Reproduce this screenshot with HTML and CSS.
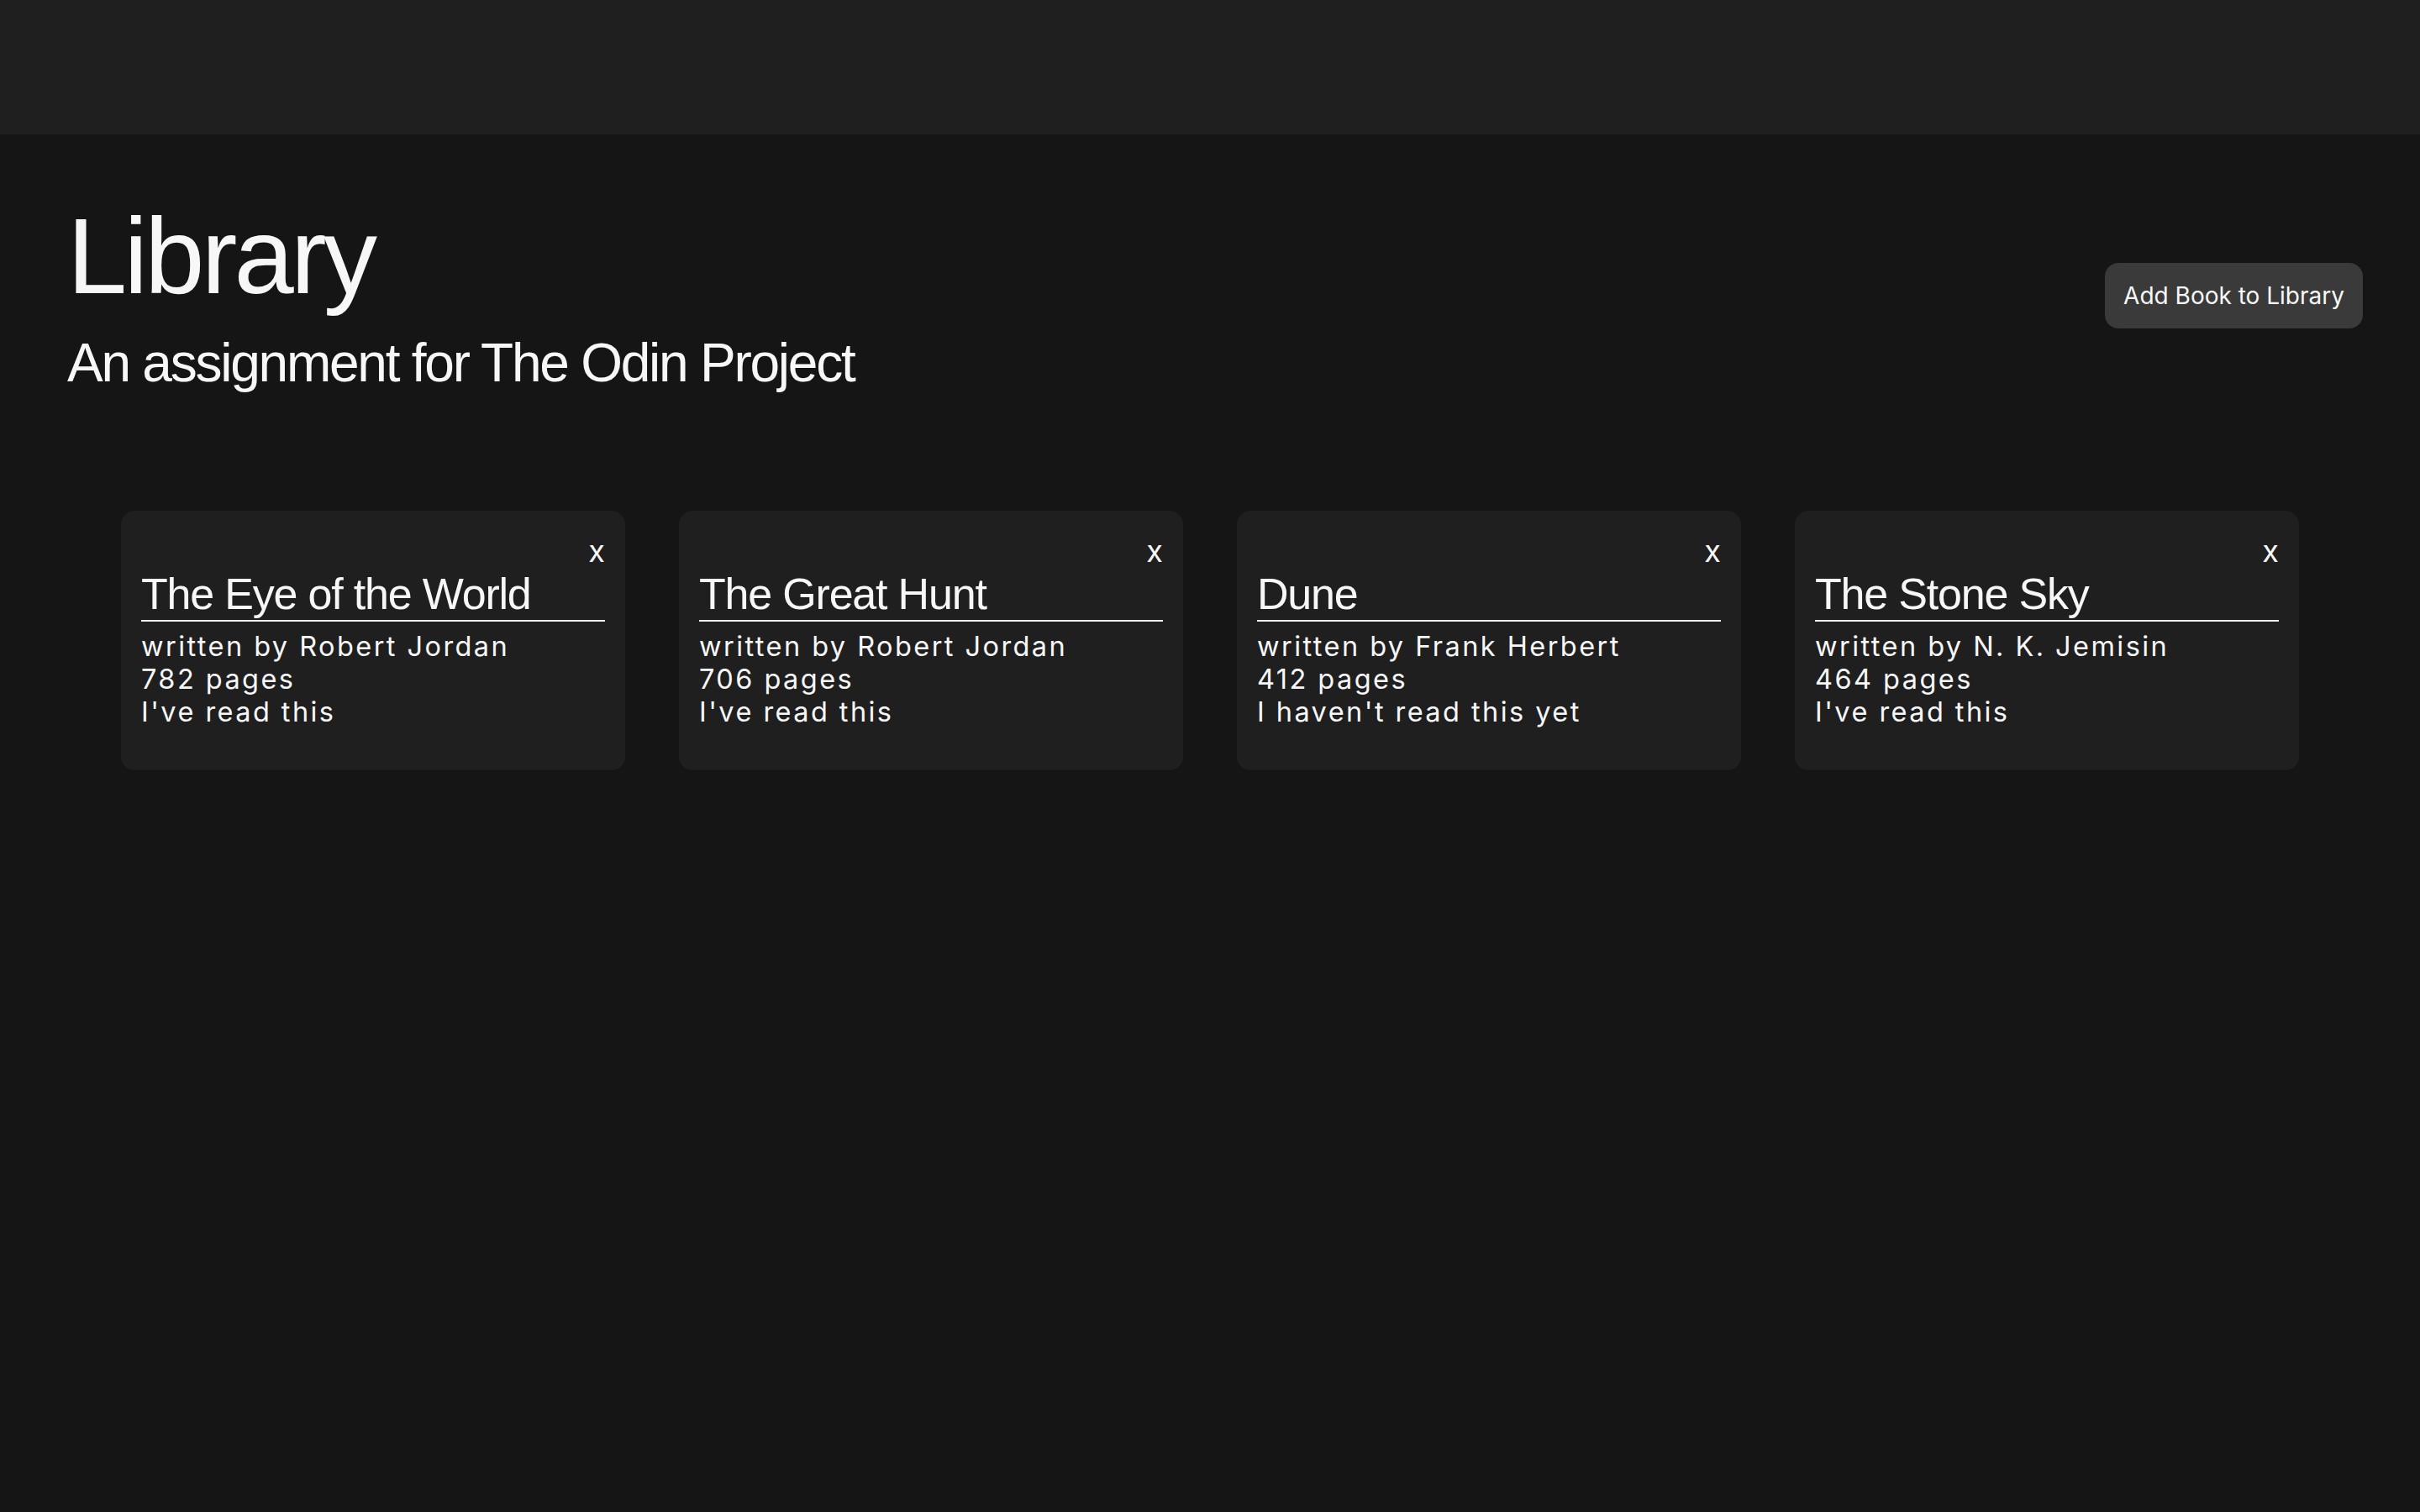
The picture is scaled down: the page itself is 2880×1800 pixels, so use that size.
FILE: index.html
```html
<!DOCTYPE html>
<html lang="en">
<head>
<meta charset="utf-8">
<title>Library</title>
<link rel="stylesheet" href="styles.css">
</head>
<body>
<header class="topbar"></header>
<main class="main">
  <section class="intro">
    <div class="intro-text">
      <h1 class="title">Library</h1>
      <p class="subtitle">An assignment for The Odin Project</p>
    </div>
    <button class="add-btn">Add Book to Library</button>
  </section>
  <section class="books">
    <article class="card">
      <button class="remove">x</button>
      <h2 class="card-title">The Eye of the World</h2>
      <p class="card-line">written by Robert Jordan</p>
      <p class="card-line">782 pages</p>
      <p class="card-line">I've read this</p>
    </article>
    <article class="card">
      <button class="remove">x</button>
      <h2 class="card-title">The Great Hunt</h2>
      <p class="card-line">written by Robert Jordan</p>
      <p class="card-line">706 pages</p>
      <p class="card-line">I've read this</p>
    </article>
    <article class="card">
      <button class="remove">x</button>
      <h2 class="card-title">Dune</h2>
      <p class="card-line">written by Frank Herbert</p>
      <p class="card-line">412 pages</p>
      <p class="card-line">I haven't read this yet</p>
    </article>
    <article class="card">
      <button class="remove">x</button>
      <h2 class="card-title">The Stone Sky</h2>
      <p class="card-line">written by N. K. Jemisin</p>
      <p class="card-line">464 pages</p>
      <p class="card-line">I've read this</p>
    </article>
  </section>
</main>
</body>
</html>
```
FILE: styles.css
```css
* { box-sizing: border-box; }

html, body {
  margin: 0;
  padding: 0;
  background: #151515;
  color: #f7f7f7;
  font-family: Inter, "Noto Sans", sans-serif;
}

.topbar {
  height: 160px;
  background: #1f1f1f;
}

.main {
  padding: 70px 68px 0 80px;
}

.intro {
  display: flex;
  justify-content: space-between;
  align-items: flex-start;
}

.title {
  margin: 0;
  font-family: "Liberation Sans", Arial, sans-serif;
  font-size: 128px;
  line-height: 150px;
  font-weight: 400;
  letter-spacing: -0.029em;
}

.subtitle {
  margin: 13px 0 0;
  font-family: "Liberation Sans", Arial, sans-serif;
  font-size: 64px;
  line-height: 78px;
  font-weight: 400;
  letter-spacing: -0.035em;
}

.add-btn {
  margin-top: 83px;
  height: 78px;
  padding: 0 22px;
  border: none;
  border-radius: 16px;
  background: #3a3a3a;
  color: #f7f7f7;
  font-family: Inter, "Noto Sans", sans-serif;
  font-size: 28px;
}

.books {
  margin: 137px -68px 0 -80px;
  display: grid;
  grid-template-columns: repeat(4, 600px);
  gap: 64px;
  justify-content: center;
}

.card {
  display: flex;
  flex-direction: column;
  padding: 28px 24px 50px;
  background: #1f1f1f;
  border-radius: 16px;
}

.remove {
  align-self: flex-end;
  padding: 0;
  border: none;
  background: none;
  color: #f7f7f7;
  font-family: Inter, "Noto Sans", sans-serif;
  font-size: 36px;
  line-height: 40px;
}

.card-title {
  margin: 0 0 10px;
  font-family: "Liberation Sans", Arial, sans-serif;
  font-size: 52px;
  line-height: 62px;
  font-weight: 400;
  letter-spacing: -0.023em;
  border-bottom: 2px solid #f7f7f7;
}

.card-line {
  margin: 0;
  font-size: 32.5px;
  line-height: 39px;
  letter-spacing: 0.075em;
}
```
